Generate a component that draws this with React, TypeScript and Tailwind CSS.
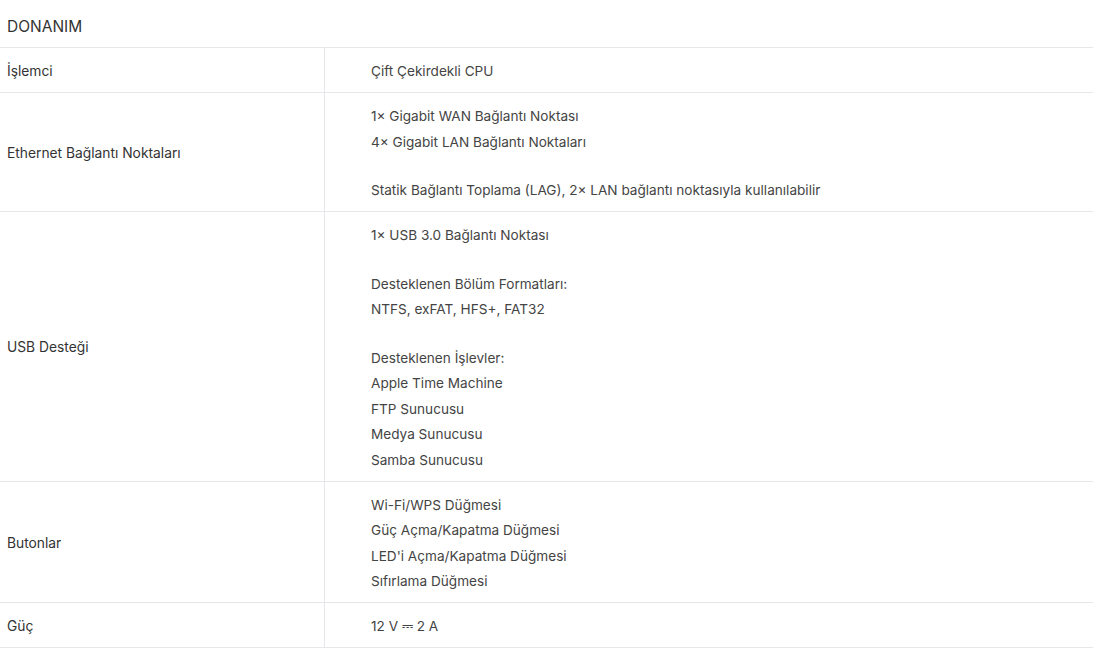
import React from "react";

type Row = { label: string; lines: (string | null)[] };

const rows: Row[] = [
  { label: "İşlemci", lines: ["Çift Çekirdekli CPU"] },
  {
    label: "Ethernet Bağlantı Noktaları",
    lines: [
      "1× Gigabit WAN Bağlantı Noktası",
      "4× Gigabit LAN Bağlantı Noktaları",
      null,
      "Statik Bağlantı Toplama (LAG), 2× LAN bağlantı noktasıyla kullanılabilir",
    ],
  },
  {
    label: "USB Desteği",
    lines: [
      "1× USB 3.0 Bağlantı Noktası",
      null,
      "Desteklenen Bölüm Formatları:",
      "NTFS, exFAT, HFS+, FAT32",
      null,
      "Desteklenen İşlevler:",
      "Apple Time Machine",
      "FTP Sunucusu",
      "Medya Sunucusu",
      "Samba Sunucusu",
    ],
  },
  {
    label: "Butonlar",
    lines: [
      "Wi-Fi/WPS Düğmesi",
      "Güç Açma/Kapatma Düğmesi",
      "LED'i Açma/Kapatma Düğmesi",
      "Sıfırlama Düğmesi",
    ],
  },
  { label: "Güç", lines: ["12 V ⎓ 2 A"] },
];

export default function App() {
  return (
    <div
      className="w-[1093px] h-[652px] bg-white text-[#333333]"
      style={{ fontFamily: "Inter, 'Noto Sans', sans-serif" }}
    >
      <div className="h-[48px] border-b border-[#e6e6eb] flex items-center pl-[7px] pt-[6px] text-[15.5px] text-[#333333]">
        DONANIM
      </div>
      {rows.map((r) => (
        <div key={r.label} className="flex border-b border-[#e6e6eb]">
          <div className="w-[325px] shrink-0 border-r border-[#e6e6eb] flex items-center pl-[7px] pt-[2px] text-[13.8px]">
            {r.label}
          </div>
          <div className="pl-[46px] pt-[11px] pb-[7.6px] text-[13.6px] text-[#444444]">
            {r.lines.map((l, i) =>
              l === null ? (
                <div key={i} className="h-[23px]" />
              ) : (
                <div key={i} className="leading-[25.5px]">
                  {l}
                </div>
              )
            )}
          </div>
        </div>
      ))}
    </div>
  );
}
